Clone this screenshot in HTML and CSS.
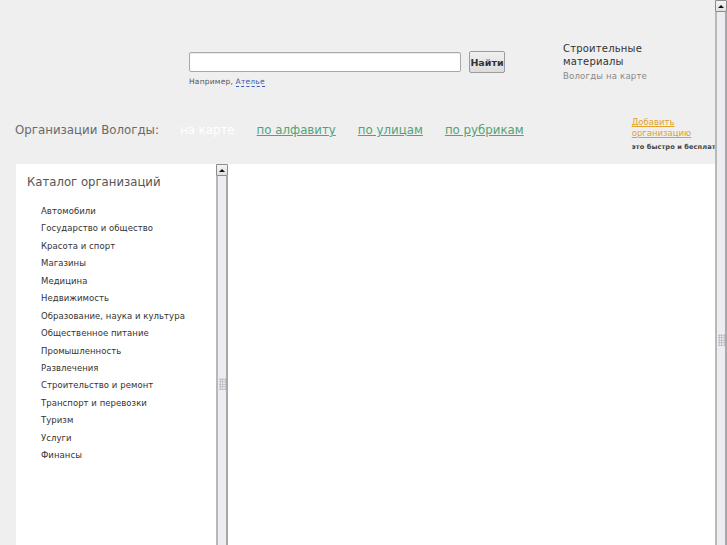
FILE: index.html
```html
<!DOCTYPE html>
<html lang="ru">
<head>
<meta charset="utf-8">
<title>Организации Вологды</title>
<link rel="stylesheet" href="styles.css">
</head>
<body>
<div class="page">
  <div class="top">
    <div class="search">
      <div class="search-row">
        <input class="search-input" type="text">
        <button class="search-btn">Найти</button>
      </div>
      <div class="hint">Например, <span class="hint-link">Ателье</span></div>
    </div>
    <div class="side">
      <div class="side-title">Строительные материалы</div>
      <div class="side-sub">Вологды на карте</div>
    </div>
  </div>
  <div class="nav">
    <span class="nav-label">Организации Вологды:</span>
    <span class="nav-current">на карте</span>
    <a class="nav-link" href="#">по алфавиту</a>
    <a class="nav-link" href="#">по улицам</a>
    <a class="nav-link" href="#">по рубрикам</a>
    <div class="add">
      <a class="add-link" href="#">Добавить организацию</a>
      <div class="add-note">это быстро и бесплатно</div>
    </div>
  </div>
  <div class="main">
    <div class="catalog">
      <div class="catalog-title">Каталог организаций</div>
      <ul class="catalog-list">
        <li>Автомобили</li>
        <li>Государство и общество</li>
        <li>Красота и спорт</li>
        <li>Магазины</li>
        <li>Медицина</li>
        <li>Недвижимость</li>
        <li>Образование, наука и культура</li>
        <li>Общественное питание</li>
        <li>Промышленность</li>
        <li>Развлечения</li>
        <li>Строительство и ремонт</li>
        <li>Транспорт и перевозки</li>
        <li>Туризм</li>
        <li>Услуги</li>
        <li>Финансы</li>
      </ul>
    </div>
    <div class="sb sb-panel">
      <div class="sb-btn"><span class="sb-arrow"></span></div>
      <div class="sb-thumb"><span class="sb-grip"></span></div>
    </div>
    <div class="map"></div>
  </div>
</div>
<div class="sb sb-page">
  <div class="sb-btn"><span class="sb-arrow"></span></div>
  <div class="sb-thumb"><span class="sb-grip"></span></div>
</div>
</body>
</html>
```

FILE: styles.css
```css
html, body {
  margin: 0;
  padding: 0;
}
body {
  width: 727px;
  height: 545px;
  overflow: hidden;
  background: #efefef;
  display: flex;
  font-family: "DejaVu Sans", Verdana, sans-serif;
}
.page {
  width: 715px;
  height: 545px;
  overflow: hidden;
  display: flex;
  flex-direction: column;
}
.top {
  display: flex;
  align-items: flex-start;
  padding: 42px 0 0 189px;
}
.search {
  width: 316px;
  padding-top: 9px;
}
.search-row {
  display: flex;
  align-items: center;
  gap: 8px;
  height: 22px;
}
.search-input {
  box-sizing: border-box;
  width: 272px;
  height: 20px;
  margin: 0;
  padding: 0 4px;
  border: 1px solid #a8a8a8;
  border-radius: 2px;
  background: #fff;
  box-shadow: inset 0 1px 1px rgba(0,0,0,0.08);
}
.search-btn {
  box-sizing: border-box;
  width: 36px;
  height: 22px;
  margin: 0;
  padding: 0;
  border: 1px solid #9c9c9c;
  border-radius: 2px;
  background: linear-gradient(#f0f0f0, #dcdcdc);
  font-family: "DejaVu Sans", sans-serif;
  font-size: 9.5px;
  font-weight: bold;
  color: #333;
}
.hint {
  margin-top: 4px;
  font-size: 7.5px;
  line-height: 10px;
  color: #555;
  letter-spacing: 0.2px;
}
.hint-link {
  color: #3a5bb0;
  border-bottom: 1px dashed #3a5bb0;
}
.side {
  margin-left: 58px;
  width: 100px;
}
.side-title {
  font-size: 10px;
  line-height: 13px;
  color: #333;
  letter-spacing: 0.2px;
}
.side-sub {
  margin-top: 3px;
  font-size: 8.5px;
  line-height: 11px;
  color: #888;
  letter-spacing: 0.2px;
}
.nav {
  display: flex;
  align-items: flex-start;
  margin-top: 30px;
  padding-left: 15px;
  font-size: 11.8px;
  line-height: 16px;
  white-space: nowrap;
}
.nav-label {
  margin-top: 5px;
  color: #6a6a6a;
  margin-right: 21px;
}
.nav-current {
  margin-top: 5px;
  color: #fff;
  margin-right: 22px;
}
.nav-link {
  margin-top: 5px;
  color: #55a276;
  text-decoration: underline;
  margin-right: 22px;
}
.add {
  margin-left: 86px;
  width: 83px;
  flex: none;
}
.add-link {
  display: block;
  width: 72px;
  white-space: normal;
  font-size: 8.5px;
  line-height: 11px;
  color: #e0a22a;
  text-decoration: underline;
}
.add-note {
  margin-top: 3px;
  font-size: 6.6px;
  line-height: 10px;
  font-weight: bold;
  color: #444;
  letter-spacing: 0.1px;
  white-space: nowrap;
}
.main {
  flex: 1;
  display: flex;
  margin: 12px 0 0 16px;
  background: #fff;
  min-height: 0;
}
.catalog {
  width: 200px;
  flex: none;
  padding: 10px 0 0 11px;
  box-sizing: border-box;
}
.catalog-title {
  font-size: 11.7px;
  line-height: 16px;
  color: #555;
}
.catalog-list {
  list-style: none;
  margin: 13px 0 0 0;
  padding: 0 0 0 14px;
}
.catalog-list li {
  font-size: 8.5px;
  line-height: 17.43px;
  color: #333;
  letter-spacing: 0.05px;
  white-space: nowrap;
}
.map {
  flex: 1;
  background: #fff;
}
.sb {
  width: 12px;
  flex: none;
  display: flex;
  flex-direction: column;
  background: #d8d8d8;
  box-sizing: border-box;
}
.sb-page {
  height: 545px;
}
.sb-btn {
  height: 12px;
  box-sizing: border-box;
  border: 1px solid #8c8c8c;
  border-radius: 1px;
  background: linear-gradient(#f4f4f4, #e0e0e0);
  display: flex;
  align-items: center;
  justify-content: center;
  flex: none;
}
.sb-arrow {
  width: 0;
  height: 0;
  border-left: 3px solid transparent;
  border-right: 3px solid transparent;
  border-bottom: 3px solid #111;
}
.sb-thumb {
  flex: 1;
  box-sizing: border-box;
  border-left: 2px solid #b8b8b8;
  border-right: 2px solid #a8a8a8;
  background: #ececf2;
  display: flex;
  justify-content: center;
}
.sb-panel .sb-thumb {
  padding-top: 202px;
}
.sb-page .sb-thumb {
  padding-top: 322px;
}
.sb-grip {
  width: 7px;
  height: 12px;
  background-image: radial-gradient(circle, #b4b4c0 0.8px, transparent 1px);
  background-size: 2.5px 2.5px;
}
```
